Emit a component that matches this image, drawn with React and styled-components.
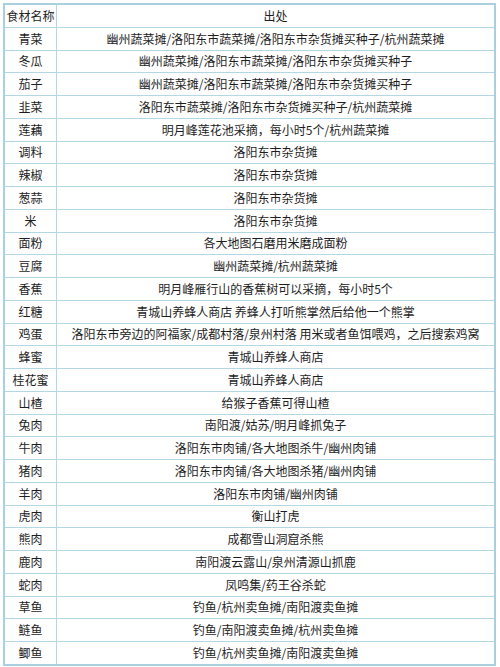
import React from "react";
import styled, { createGlobalStyle } from "styled-components";

const Global = createGlobalStyle`
  html, body { margin: 0; padding: 0; background: #ffffff; }
  body { font-family: "Noto Sans CJK SC", "Noto Sans", sans-serif; }
`;

const Page = styled.div`
  padding: 3px 4px 0 3px;
`;

const Table = styled.table`
  width: 493px;
  border-collapse: collapse;
  table-layout: fixed;
  border: 2px solid #a9d0df;
  color: #1e1e1e;
  font-size: 12px;
`;

const Cell = styled.td`
  border: 1px solid #b3d7e4;
  height: 21.76px;
  padding: 0;
  text-align: center;
  vertical-align: middle;
  line-height: 14px;
  white-space: nowrap;
  width: ${(p) => (p.$narrow ? "51px" : "auto")};
`;

const rows = [
  ["青菜", "幽州蔬菜摊/洛阳东市蔬菜摊/洛阳东市杂货摊买种子/杭州蔬菜摊"],
  ["冬瓜", "幽州蔬菜摊/洛阳东市蔬菜摊/洛阳东市杂货摊买种子"],
  ["茄子", "幽州蔬菜摊/洛阳东市蔬菜摊/洛阳东市杂货摊买种子"],
  ["韭菜", "洛阳东市蔬菜摊/洛阳东市杂货摊买种子/杭州蔬菜摊"],
  ["莲藕", "明月峰莲花池采摘，每小时5个/杭州蔬菜摊"],
  ["调料", "洛阳东市杂货摊"],
  ["辣椒", "洛阳东市杂货摊"],
  ["葱蒜", "洛阳东市杂货摊"],
  ["米", "洛阳东市杂货摊"],
  ["面粉", "各大地图石磨用米磨成面粉"],
  ["豆腐", "幽州蔬菜摊/杭州蔬菜摊"],
  ["香蕉", "明月峰雁行山的香蕉树可以采摘，每小时5个"],
  ["红糖", "青城山养蜂人商店 养蜂人打听熊掌然后给他一个熊掌"],
  ["鸡蛋", "洛阳东市旁边的阿福家/成都村落/泉州村落 用米或者鱼饵喂鸡，之后搜索鸡窝"],
  ["蜂蜜", "青城山养蜂人商店"],
  ["桂花蜜", "青城山养蜂人商店"],
  ["山楂", "给猴子香蕉可得山楂"],
  ["兔肉", "南阳渡/姑苏/明月峰抓兔子"],
  ["牛肉", "洛阳东市肉铺/各大地图杀牛/幽州肉铺"],
  ["猪肉", "洛阳东市肉铺/各大地图杀猪/幽州肉铺"],
  ["羊肉", "洛阳东市肉铺/幽州肉铺"],
  ["虎肉", "衡山打虎"],
  ["熊肉", "成都雪山洞窟杀熊"],
  ["鹿肉", "南阳渡云露山/泉州清源山抓鹿"],
  ["蛇肉", "凤鸣集/药王谷杀蛇"],
  ["草鱼", "钓鱼/杭州卖鱼摊/南阳渡卖鱼摊"],
  ["鲢鱼", "钓鱼/南阳渡卖鱼摊/杭州卖鱼摊"],
  ["鲫鱼", "钓鱼/杭州卖鱼摊/南阳渡卖鱼摊"],
];

export default function App() {
  return (
    <Page>
      <Global />
      <Table>
        <tbody>
          <tr>
            <Cell $narrow>食材名称</Cell>
            <Cell>出处</Cell>
          </tr>
          {rows.map(([name, src]) => (
            <tr key={name}>
              <Cell $narrow>{name}</Cell>
              <Cell>{src}</Cell>
            </tr>
          ))}
        </tbody>
      </Table>
    </Page>
  );
}
